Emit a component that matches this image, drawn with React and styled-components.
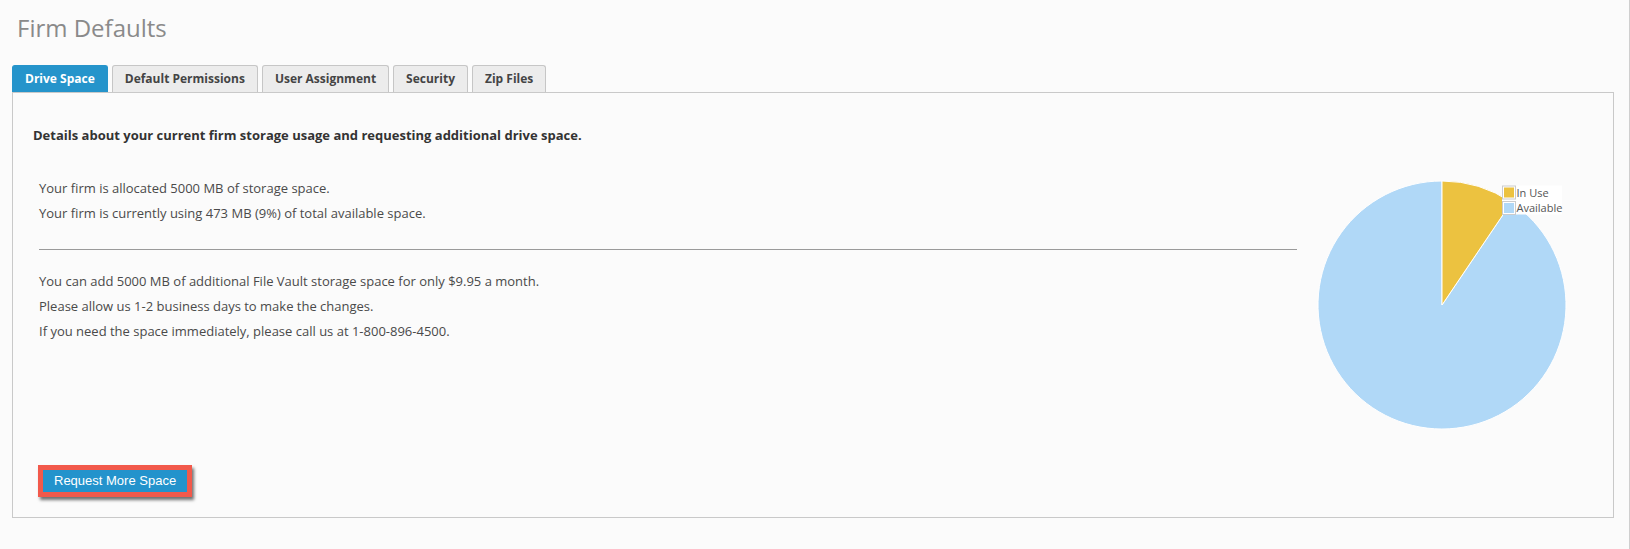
import React from 'react'
import styled, { createGlobalStyle } from 'styled-components'

const tabs = ['Drive Space', 'Default Permissions', 'User Assignment', 'Security', 'Zip Files']

const usage = { allocated: 5000, used: 473 }

const GlobalStyle = createGlobalStyle`
  html, body {
    margin: 0;
    padding: 0;
    background: #fbfbfb;
  }
  body {
    font-family: 'Open Sans', 'Liberation Sans', sans-serif;
  }
`

const App = () => {
  const percent = Math.round((usage.used / usage.allocated) * 100)

  return (
    <>
      <GlobalStyle />
      <Page>
        <Title>Firm Defaults</Title>

        <TabBar>
          {tabs.map((tab, i) => (
            <Tab key={tab} $active={i === 0}>{tab}</Tab>
          ))}
        </TabBar>

        <Panel>
          <Heading>
            Details about your current firm storage usage and requesting additional drive space.
          </Heading>

          <Row>
            <Info>
              <Line>Your firm is allocated {usage.allocated} MB of storage space.</Line>
              <Line>
                Your firm is currently using {usage.used} MB ({percent}%) of total available space.
              </Line>
              <Rule />
              <Line>You can add 5000 MB of additional File Vault storage space for only $9.95 a month.</Line>
              <Line>Please allow us 1-2 business days to make the changes.</Line>
              <Line>If you need the space immediately, please call us at 1-800-896-4500.</Line>
            </Info>

            <UsageChart used={usage.used} total={usage.allocated} />
          </Row>

          <Highlight>
            <RequestButton>Request More Space</RequestButton>
          </Highlight>
        </Panel>
      </Page>
    </>
  )
}

function UsageChart ({ used, total }) {
  const cx = 139
  const cy = 129
  const r = 124
  const angle = (used / total) * Math.PI * 2
  const ex = cx + r * Math.sin(angle)
  const ey = cy - r * Math.cos(angle)
  const large = angle > Math.PI ? 1 : 0

  return (
    <Chart width='290' height='260' viewBox='0 0 290 260'>
      <path
        d={`M${cx} ${cy} L${ex} ${ey} A${r} ${r} 0 ${1 - large} 1 ${cx} ${cy - r} Z`}
        fill='#b0d8f7'
        stroke='#fff'
        strokeWidth='1'
      />
      <path
        d={`M${cx} ${cy} L${cx} ${cy - r} A${r} ${r} 0 ${large} 1 ${ex} ${ey} Z`}
        fill='#ecc240'
        stroke='#fff'
        strokeWidth='1'
      />

      <rect x='199' y='9.5' width='60' height='29' fill='#fff' />
      <rect x='199.5' y='10' width='13' height='13' fill='#fff' stroke='#ccc' />
      <rect x='201' y='11.5' width='10' height='10' fill='#ecc240' />
      <LegendText x='213.5' y='20.5'>In Use</LegendText>
      <rect x='199.5' y='25.5' width='13' height='13' fill='#fff' stroke='#ccc' />
      <rect x='201' y='27' width='10' height='10' fill='#b0d8f7' />
      <LegendText x='213.5' y='36'>Available</LegendText>
    </Chart>
  )
}

const Page = styled.div`
  box-sizing: border-box;
  width: 1630px;
  min-height: 100vh;
  padding: 12px 15px 20px 12px;
  border-right: 1px solid #cfcfcf;
`

const Title = styled.h1`
  margin: 0 0 21px;
  padding-left: 5px;
  font-size: 24px;
  line-height: 32px;
  font-weight: 400;
  color: #8a8a8a;
`

const TabBar = styled.div`
  display: flex;
  gap: 4px;
`

const Tab = styled.div`
  box-sizing: border-box;
  height: 27px;
  padding: 0 12px;
  border: 1px solid ${({ $active }) => ($active ? '#2594cb' : '#c6c6c6')};
  border-bottom: none;
  border-radius: 3px 3px 0 0;
  background: ${({ $active }) => ($active ? '#2594cb' : '#ececec')};
  color: ${({ $active }) => ($active ? '#fff' : '#444')};
  font-size: 12px;
  font-weight: 700;
  line-height: 26px;
  white-space: nowrap;
`

const Panel = styled.div`
  border: 1px solid #c9c9c9;
  padding: 34px 20px 20px;
`

const Heading = styled.h2`
  margin: 0;
  font-size: 13px;
  font-weight: 700;
  line-height: 17px;
  color: #333;
`

const Row = styled.div`
  display: grid;
  grid-template-columns: 1fr 290px;
  column-gap: 6px;
  margin-top: 32px;
  padding-left: 6px;
`

const Info = styled.div`
  display: flex;
  flex-direction: column;
`

const Line = styled.p`
  margin: 0;
  font-size: 13px;
  line-height: 25px;
  color: #4a4a4a;
`

const Rule = styled.hr`
  width: 100%;
  margin: 23px 0 19px;
  border: none;
  border-top: 1px solid #9a9a9a;
`

const Chart = styled.svg`
  display: block;
`

const LegendText = styled.text`
  font-family: 'Open Sans', sans-serif;
  font-size: 11px;
  fill: #555;
`

const Highlight = styled.div`
  display: inline-block;
  margin: 29px 0 0 5px;
  border: 5px solid #f2594b;
  box-shadow: 2px 3px 3px rgba(0, 0, 0, 0.55);
`

const RequestButton = styled.button`
  display: block;
  height: 22px;
  padding: 0 11px;
  border: none;
  background: #2393cc;
  color: #fff;
  font-family: 'Liberation Sans', Arial, sans-serif;
  font-size: 13px;
  line-height: 22px;
  cursor: pointer;
`

export default App
